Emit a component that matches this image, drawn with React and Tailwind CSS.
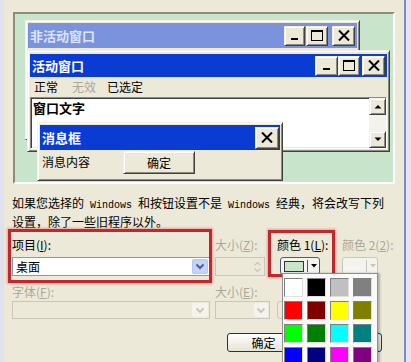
import React from "react";

const CJK = "font-['Noto_Sans_CJK_SC','Noto_Sans',sans-serif]";
const raised =
  "border border-t-[#f4f2e8] border-l-[#f4f2e8] border-r-[#404040] border-b-[#404040] shadow-[inset_1px_1px_0_#ffffff,inset_-1px_-1px_0_#8c8a7e]";
const sunken =
  "border border-t-[#8c8a7e] border-l-[#8c8a7e] border-r-white border-b-white shadow-[inset_1px_1px_0_#404040,inset_-1px_-1px_0_#ECE9D8]";

function MinIcon() {
  return (
    <svg width="10" height="10" viewBox="0 0 10 10">
      <rect x="1" y="7" width="7" height="2" fill="#000" />
    </svg>
  );
}
function MaxIcon() {
  return (
    <svg width="12" height="11" viewBox="0 0 12 11">
      <rect x="0.5" y="0.5" width="11" height="10" fill="none" stroke="#000" strokeWidth="1" />
      <rect x="0" y="0" width="12" height="2" fill="#000" />
    </svg>
  );
}
function CloseIcon() {
  return (
    <svg width="12" height="11" viewBox="0 0 12 11">
      <path d="M1 0.5 L11 10.5 M11 0.5 L1 10.5" stroke="#000" strokeWidth="2" />
    </svg>
  );
}

function TB({ children, w = 21, h = 19 }) {
  return (
    <div
      className={`${raised} bg-[#ECE9D8] flex items-center justify-center`}
      style={{ width: w, height: h }}
    >
      {children}
    </div>
  );
}

function Tri({ up }) {
  return (
    <svg width="8" height="5" viewBox="0 0 8 5">
      {up ? <path d="M0.5 4.5 L4 1 L7.5 4.5 Z" fill="#000" /> : <path d="M0.5 0.5 L4 4 L7.5 0.5 Z" fill="#000" />}
    </svg>
  );
}

function Chevron({ color }) {
  return (
    <svg width="10" height="7" viewBox="0 0 10 7">
      <path d="M1.5 1.5 L5 5 L8.5 1.5" fill="none" stroke={color} strokeWidth="2" />
    </svg>
  );
}

const palette = [
  "#ffffff", "#000000", "#c0c0c0", "#808080",
  "#ff0000", "#800000", "#ffff00", "#808000",
  "#00ff00", "#008000", "#00ffff", "#008080",
  "#0000ff", "#000080", "#ff00ff", "#800080",
];

export default function App() {
  return (
    <div className={`w-[411px] h-[362px] overflow-hidden bg-[#ECE9D8] flex ${CJK} text-black`}>
      <div className="w-[4px] h-full bg-[#dfe2ee]" />
      <div className="relative flex-1 flex flex-col pt-[12px]">
        {/* preview */}
        <div className="ml-[9px] w-[382px] h-[172px] border-2 border-t-[#8e8b7c] border-l-[#8e8b7c] border-r-white border-b-white bg-[#c8e5cc] relative overflow-hidden">
          {/* inactive window */}
          <div className={`absolute left-[10px] top-[6px] w-[335px] h-[120px] bg-[#ECE9D8] p-[2px] ${raised}`}>
            <div className="h-[25px] bg-[#7b93dc] flex items-center pl-[2px] pr-[2px]">
              <span className="text-[13px] font-bold text-[#dbe3f7] leading-none">非活动窗口</span>
              <div className="ml-auto flex items-center">
                <TB w={21} h={20}><MinIcon /></TB>
                <div className="ml-[1px]"><TB w={22} h={20}><MaxIcon /></TB></div>
                <div className="ml-[4px]"><TB w={23} h={20}><CloseIcon /></TB></div>
              </div>
            </div>
          </div>
          {/* active window */}
          <div className={`absolute left-[12px] top-[36px] w-[363px] h-[102px] bg-[#ECE9D8] p-[2px] pt-[3px] flex flex-col ${raised}`}>
            <div className="h-[23px] bg-[#0a3cd4] flex items-center pl-[2px] pr-[2px]">
              <span className="text-[13px] font-bold text-white leading-none">活动窗口</span>
              <div className="ml-auto flex items-center">
                <TB w={23} h={20}><MinIcon /></TB>
                <TB w={22} h={20}><MaxIcon /></TB>
                <div className="ml-[2px]"><TB w={23} h={20}><CloseIcon /></TB></div>
              </div>
            </div>
            <div className="h-[20px] flex items-center text-[12px] leading-none">
              <span className="ml-[4px]">正常</span>
              <span className="ml-[14px] text-[#aca899]">无效</span>
              <span className="ml-[11px]">已选定</span>
            </div>
            <div className={`flex-1 bg-white flex ${sunken}`}>
              <div className="flex-1 pl-[2px] pt-[2px] text-[13px] font-bold leading-[16px]">窗口文字</div>
              <div className="w-[17px] bg-[#f3f2ec] flex flex-col">
                <TB w={17} h={17}><Tri up /></TB>
                <div className="flex-1" />
                <TB w={17} h={17}><Tri /></TB>
              </div>
            </div>
          </div>
          {/* message box */}
          <div className={`absolute left-[22px] top-[108px] w-[246px] h-[59px] bg-[#ECE9D8] p-[2px] flex flex-col ${raised}`}>
            <div className="h-[25px] bg-[#0a3cd4] flex items-center pl-[2px] pr-[1px]">
              <span className="text-[13px] font-bold text-white leading-none">消息框</span>
              <div className="ml-auto"><TB w={24} h={22}><CloseIcon /></TB></div>
            </div>
            <div className="flex items-start">
              <span className="ml-[2px] mt-[5px] text-[12px] leading-[14px]">消息内容</span>
              <div className={`ml-[33px] mt-[1px] w-[72px] h-[23px] ${raised} bg-[#ECE9D8] flex items-center justify-center text-[12px]`}>
                确定
              </div>
            </div>
          </div>
        </div>

        {/* paragraph */}
        <div className="mt-[11px] pl-[8px] text-[12px] leading-[16px] whitespace-pre">
          <div>
            如果您选择的<span className="font-['Liberation_Mono',monospace] text-[10px]"> Windows </span>和按钮设置不是<span className="font-['Liberation_Mono',monospace] text-[10px]"> Windows </span>经典，将会改写下列
          </div>
          <div>设置，除了一些旧程序以外。</div>
        </div>

        {/* row 1 */}
        <div className="mt-[7px] flex text-[12px]">
          <div className="ml-[8px] w-[198px] flex flex-col">
            <div className="h-[16px] leading-[16px]">项目(<u>I</u>):</div>
            <div className="mt-[4px] h-[19px] bg-white border border-[#7f9db9] flex items-center">
              <span className="ml-[3px] leading-none">桌面</span>
              <div className="ml-auto mr-[1px] w-[16px] h-[15px] rounded-[2px] bg-[#c3d3fb] border border-[#b3c6f2] flex items-center justify-center">
                <Chevron color="#4d6185" />
              </div>
            </div>
          </div>
          <div className="ml-[5px] w-[50px] flex flex-col text-[#aca899]">
            <div className="h-[16px] leading-[16px]">大小(<u>Z</u>):</div>
            <div className="mt-[4px] h-[19px] border border-[#c9c7ba] flex justify-end">
              <div className="w-[12px] flex flex-col items-center justify-center gap-[2px] mr-[1px]">
                <svg width="7" height="4" viewBox="0 0 7 4"><path d="M0.5 3.5 L3.5 0.5 L6.5 3.5" fill="none" stroke="#c9c7ba" strokeWidth="1.2" /></svg>
                <svg width="7" height="4" viewBox="0 0 7 4"><path d="M0.5 0.5 L3.5 3.5 L6.5 0.5" fill="none" stroke="#c9c7ba" strokeWidth="1.2" /></svg>
              </div>
            </div>
          </div>
          <div className="ml-[12px] w-[65px] flex flex-col">
            <div className="h-[16px] leading-[16px] whitespace-pre">颜色 1(<u>L</u>):</div>
            <div className="mt-[4px] ml-[3px] w-[40px] h-[18px] rounded-[3px] border border-[#4b5c7a] bg-[#f4f3ee] flex items-center">
              <div className="ml-[3px] w-[20px] h-[11px] bg-[#c8e5cc] border border-[#333]" />
              <div className="ml-[3px] w-[1px] h-[12px] bg-[#555]" />
              <svg className="ml-[3px]" width="6" height="4" viewBox="0 0 6 4"><path d="M0 0 L6 0 L3 3.5 Z" fill="#000" /></svg>
            </div>
          </div>
          <div className="flex flex-col text-[#aca899]">
            <div className="h-[16px] leading-[16px] whitespace-pre">颜色 2(<u>2</u>):</div>
            <div className="mt-[4px] w-[36px] h-[18px] rounded-[3px] border border-[#c9c7ba] bg-[#f4f3ee] flex items-center">
              <div className="ml-[23px] w-[1px] h-[12px] bg-[#c9c7ba]" />
              <svg className="ml-[3px]" width="6" height="4" viewBox="0 0 6 4"><path d="M0 0 L6 0 L3 3.5 Z" fill="#c9c7ba" /></svg>
            </div>
          </div>
        </div>

        {/* row 2 */}
        <div className="mt-[8px] flex text-[12px] text-[#aca899]">
          <div className="ml-[8px] w-[198px] flex flex-col">
            <div className="h-[16px] leading-[16px]">字体(<u>F</u>):</div>
            <div className="mt-[1px] h-[18px] border border-[#c9c7ba] bg-[#ECE9D8] flex items-center">
              <div className="ml-auto mr-[1px] w-[16px] h-[14px] rounded-[2px] bg-[#f4f3ee] flex items-center justify-center">
                <Chevron color="#c9c7ba" />
              </div>
            </div>
          </div>
          <div className="ml-[5px] w-[55px] flex flex-col">
            <div className="h-[16px] leading-[16px]">大小(<u>E</u>):</div>
            <div className="mt-[1px] h-[18px] border border-[#c9c7ba] bg-[#ECE9D8] flex items-center">
              <div className="ml-auto mr-[1px] w-[14px] h-[14px] rounded-[2px] bg-[#f4f3ee] flex items-center justify-center">
                <Chevron color="#c9c7ba" />
              </div>
            </div>
          </div>
          <div className="ml-[7px] mt-[17px] w-[24px] h-[18px] rounded-[3px] border border-[#c9c7ba] flex items-center justify-center font-bold">B</div>
        </div>

        {/* buttons */}
        <div className="mt-[14px] flex text-[12px]">
          <div className="ml-[223px] w-[73px] h-[19px] rounded-[3px] border border-[#003c74] bg-gradient-to-b from-white to-[#e6e3d6] flex items-center justify-center">确定</div>
          <div className="ml-[5px] w-[77px] h-[19px] rounded-[3px] border border-[#003c74] bg-gradient-to-b from-white to-[#e6e3d6] flex items-center justify-center">取消</div>
        </div>

        {/* red annotation boxes */}
        <div className="absolute left-[4px] top-[229px] w-[204px] h-[54px] border-[3px] border-[#c0282d] shadow-[0_0_2px_1px_rgba(235,130,130,0.7)]" />
        <div className="absolute left-[264px] top-[230px] w-[67px] h-[47px] border-[3px] border-[#c0282d] shadow-[0_0_2px_1px_rgba(235,130,130,0.7)]" />

        {/* color palette popup */}
        <div className="absolute left-[278px] top-[273px] w-[96px] h-[100px] bg-[#fafafa] border border-[#8f8f8f] shadow-[2px_0_2px_rgba(0,0,0,0.25)] pt-[4px] pl-[1px]">
          <div className="grid grid-cols-[19px_19px_19px_19px] gap-[4px]">
            {palette.map((c, i) => (
              <div
                key={i}
                className="w-[19px] h-[19px] border border-t-[#808080] border-l-[#808080] border-r-[#e0e0e0] border-b-[#e0e0e0]"
                style={{ backgroundColor: c }}
              />
            ))}
          </div>
        </div>
      </div>
      <div className="w-[2px] h-full bg-[#7f86c9]" />
      <div className="w-[5px] h-full bg-[#e3e5f1]" />
    </div>
  );
}
